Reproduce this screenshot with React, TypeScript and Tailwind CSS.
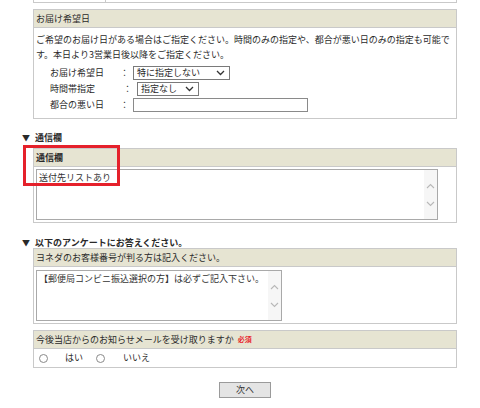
import React from "react";

const Chevron = ({ up }: { up?: boolean }) => (
  <svg width="9" height="6" viewBox="0 0 9 6" className="block">
    <path
      d={up ? "M1 5 L4.5 1.5 L8 5" : "M1 1 L4.5 4.5 L8 1"}
      fill="none"
      stroke="#b8b8b8"
      strokeWidth="1.1"
    />
  </svg>
);

const DownArrow = () => (
  <svg width="9" height="6" viewBox="0 0 9 6" className="block">
    <path d="M1 1 L4.5 4.5 L8 1" fill="none" stroke="#333" strokeWidth="1.3" />
  </svg>
);

const FakeTextarea = ({ text, width }: { text: string; width: string }) => (
  <div className={`flex h-[51px] border border-[#a9a9a9] bg-white ${width}`}>
    <div className="flex-1 px-[2px] pt-[1px] leading-[13px] text-[#333]">{text}</div>
    <div className="flex w-[13px] flex-col items-center justify-center gap-[12px] bg-[#f6f6f6]">
      <Chevron up />
      <Chevron />
    </div>
  </div>
);

const Header = ({ children }: { children: React.ReactNode }) => (
  <div className="flex h-[18px] items-center border-b border-[#c9c9c9] bg-[#e6e4d2] px-[2px]">
    {children}
  </div>
);

const SectionTitle = ({ children }: { children: React.ReactNode }) => (
  <div className="flex h-[10px] items-center gap-[5px] pl-[22px] font-bold leading-[10px]">
    <span className="text-[8px]">▼</span>
    <span>{children}</span>
  </div>
);

const Radio = () => (
  <span className="inline-block h-[9px] w-[9px] rounded-full border border-[#8a8a8a] bg-white" />
);

export default function App() {
  return (
    <div className="relative h-[408px] w-[480px] overflow-hidden bg-white font-['Noto_Sans_CJK_JP','Noto_Sans',sans-serif] text-[9px] text-[#2a2a2a]">
      {/* 前の欄の下端 */}
      <div className="ml-[33px] flex h-[3px] w-[424px] border-x border-b border-[#c9c9c9]">
        <div className="w-[72px] border-r border-[#c9c9c9]" />
      </div>

      {/* お届け希望日 */}
      <div className="ml-[33px] mt-[6px] w-[424px] border border-[#c9c9c9]">
        <Header>お届け希望日</Header>
        <div className="px-[2px] pb-[5px] pt-[4px]">
          <p className="leading-[15px]">
            ご希望のお届け日がある場合はご指定ください。時間のみの指定や、都合が悪い日のみの指定も可能で
            <br />
            す。本日より3営業日後以降をご指定ください。
          </p>
          <div className="mt-[3px] pl-[14px]">
            <div className="flex h-[16px] items-center">
              <span className="w-[70px]">お届け希望日</span>
              <span className="w-[13px]">：</span>
              <div className="flex h-[14px] w-[97px] items-center justify-between border border-[#7a7a7a] pl-[3px] pr-[4px]">
                <span>特に指定しない</span>
                <DownArrow />
              </div>
            </div>
            <div className="flex h-[16px] items-center">
              <span className="w-[73px]">時間帯指定</span>
              <span className="w-[14px]">：</span>
              <div className="flex h-[14px] w-[62px] items-center justify-between border border-[#7a7a7a] pl-[3px] pr-[4px]">
                <span>指定なし</span>
                <DownArrow />
              </div>
            </div>
            <div className="flex h-[16px] items-center">
              <span className="w-[70px]">都合の悪い日</span>
              <span className="w-[13px]">：</span>
              <div className="h-[14px] w-[175px] border border-[#8a8a8a] bg-white" />
            </div>
          </div>
        </div>
      </div>

      {/* 通信欄 */}
      <div className="mt-[14px]">
        <SectionTitle>通信欄</SectionTitle>
      </div>
      <div className="ml-[33px] mt-[5px] w-[424px] border border-[#c9c9c9]">
        <Header>
          <span className="font-bold">通信欄</span>
        </Header>
        <div className="px-[2px] pb-[2px] pt-[2px]">
          <FakeTextarea text="送付先リストあり" width="w-[402px]" />
        </div>
      </div>

      {/* アンケート */}
      <div className="mt-[15px]">
        <SectionTitle>以下のアンケートにお答えください。</SectionTitle>
      </div>
      <div className="ml-[33px] w-[424px] border border-[#c9c9c9]">
        <Header>ヨネダのお客様番号が判る方は記入ください。</Header>
        <div className="px-[2px] pb-[2px] pt-[3px]">
          <FakeTextarea text="【郵便局コンビニ振込選択の方】は必ずご記入下さい。" width="w-[246px]" />
        </div>
      </div>

      <div className="ml-[33px] mt-[6px] w-[424px] border border-[#c9c9c9]">
        <Header>
          <span>今後当店からのお知らせメールを受け取りますか</span>
          <span className="ml-[4px] text-[7px] font-bold text-[#e8262d]">必須</span>
        </Header>
        <div className="flex h-[18px] items-center pl-[5px]">
          <Radio />
          <span className="ml-[17px]">はい</span>
          <span className="ml-[13px] flex">
            <Radio />
          </span>
          <span className="ml-[18px]">いいえ</span>
        </div>
      </div>

      <div className="mt-[14px] flex justify-center">
        <button className="ml-[10px] h-[16px] w-[52px] border border-[#9a9a9a] bg-[#e4e4e4] text-[9px] leading-[14px] text-[#333]">
          次へ
        </button>
      </div>

      {/* 注記の赤枠 */}
      <div className="absolute left-[23px] top-[145px] h-[41px] w-[97px] border-[3px] border-[#e5212b]" />
    </div>
  );
}
